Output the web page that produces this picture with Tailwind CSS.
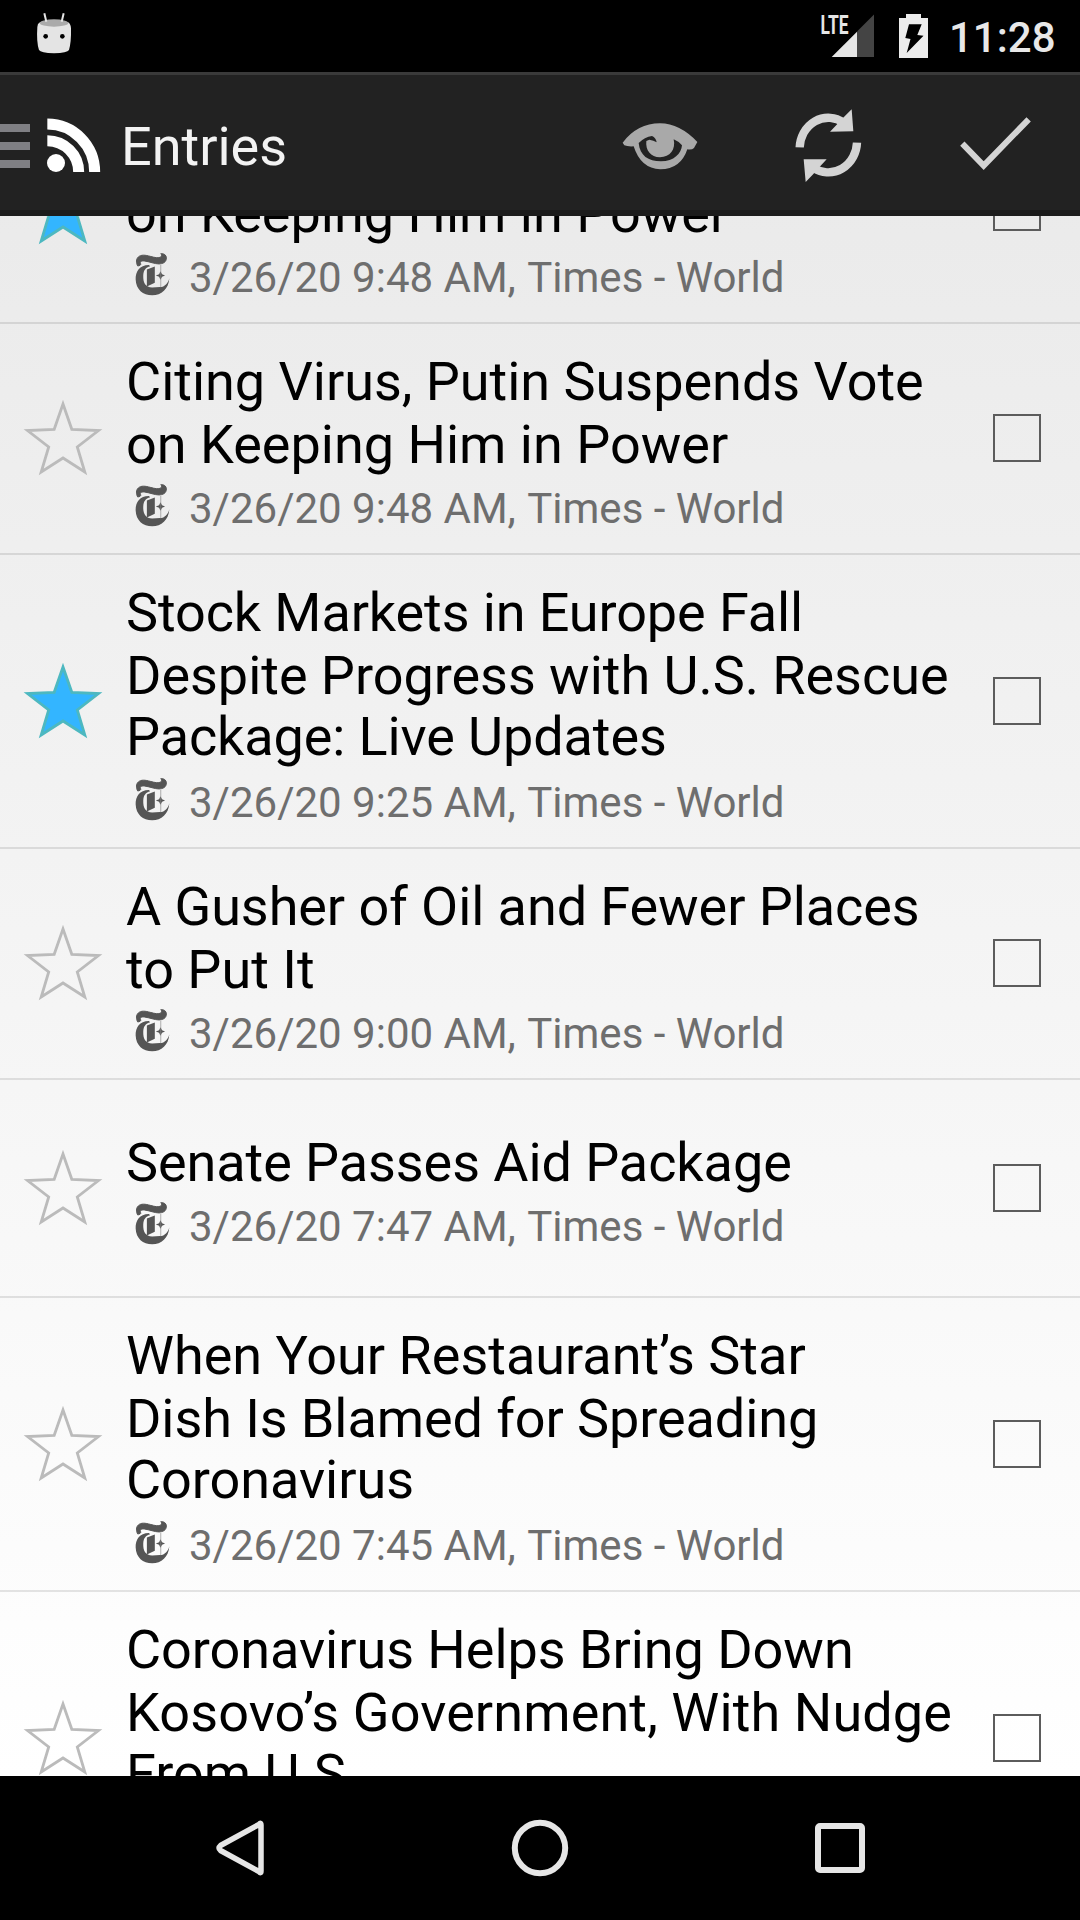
<!DOCTYPE html>
<html lang="en">
<head>
<meta charset="utf-8">
<title>Entries</title>
<script src="https://cdn.jsdelivr.net/npm/@tailwindcss/browser@4"></script>
</head>
<body class="w-[1080px] h-[1920px] overflow-hidden flex flex-col bg-linear-to-b from-[#e8e8e8] to-white to-[1776px] font-['Roboto',sans-serif]">

<svg class="hidden">
  <symbol id="star" viewBox="0 0 126 80">
    <path d="M63 6 L71.8 31.3 L98.500 32.500 L77.300 49 L84.800 74 L63 60 L41.200 74 L48.700 49 L27.500 32.500 L54.200 31.3 Z" stroke-width="2.8"/>
  </symbol>
  <symbol id="paper" viewBox="46 40 106 130">
    <path fill="#555" stroke="#555" stroke-width="3" d="M54 79 C49 70 49 58 56 52 C64 44 78 46 92 50 C106 54 118 56 124 52 C128 49 127 44 124 42 C134 41 141 46 141 55 C141 68 130 73 118 73 C106 73 90 66 74 64 C64 63 60 67 63 72 C65 76 60 79 54 79 Z"/>
    <path fill="#555" d="M88 76 C60 76 47 96 48 120 C49 150 70 168 98 168 C126 168 148 148 150 116 C146 132 136 142 122 143 L98 144 C78 144 70 130 71 108 C72 92 78 84 92 80 Z"/>
    <path fill="#555" d="M82 90 L106 81 L106 130 L82 141 Z"/>
    <path fill="#555" d="M123 95 L128 104 L137 108 L128 112 L123 121 L119 112 L109 108 L119 104 Z"/>
    <path stroke="#888" stroke-width="2" fill="none" d="M124 76 V144"/>
  </symbol>
</svg>

<div class="h-[72px] shrink-0 bg-black flex items-start">
  <svg class="ml-9 mt-[13px] w-9 h-[42px]" viewBox="108 38 108 126">
    <path d="M112 80 Q112 70 120 66 Q162 52 204 66 Q212 70 213 84 Q214 125 207 149 Q202 158 162 159 Q122 158 117 149 Q109 125 112 80Z" fill="#e4e4e4"/>
    <ellipse cx="162" cy="68" rx="43" ry="11" fill="#aaa"/>
    <path d="M133 39 L139 64 M191 39 L185 64" stroke="#e4e4e4" stroke-width="6"/>
    <circle cx="137" cy="108" r="7"/><circle cx="187" cy="108" r="7"/>
  </svg>
  <svg class="ml-[748px] mt-3 w-[56px] h-12" viewBox="820 12 56 48">
    <path d="M857 57 V31.5 L874 14.5 V57Z" fill="#444"/>
    <path d="M831.7 57 L857 31.7 V57Z" fill="#e6e6e6"/>
    <text x="820.5" y="33.8" textLength="28" lengthAdjust="spacingAndGlyphs" font-size="26" font-weight="700" fill="#e6e6e6">LTE</text>
  </svg>
  <svg class="ml-[22px] mt-3 w-[31px] h-12" viewBox="898 12 31 48">
    <path d="M906 14 H921 V18 H928 V58 H899 V18 H906Z" fill="#ececec"/>
    <path d="M909 24.3 H921.7 L917.3 35 L923.5 35.7 L906.7 53 L910.5 39 L905.3 38Z"/>
  </svg>
  <div class="ml-[20px] mt-[13px] text-[42px] leading-[50px] font-medium text-[#e8e8e8]">11:28</div>
</div>

<header class="h-36 shrink-0 bg-[#222] border-t-3 border-t-[#3a3a3a] border-b-6 border-b-[#1b1b1b] flex items-center">
  <div class="flex flex-col gap-[10px] w-[30px] mt-[7px]">
    <div class="h-2 bg-[#808084]"></div><div class="h-2 bg-[#808084]"></div><div class="h-2 bg-[#808084]"></div>
  </div>
  <svg class="ml-4 mt-1 w-[56px] h-[56px]" viewBox="138 348 168 168">
    <circle cx="168" cy="486" r="27" fill="#fff"/>
    <path d="M142 419 A94 94 0 0 1 236 513 M142 369 A142 144 0 0 1 284 513" fill="none" stroke="#fff" stroke-width="33"/>
  </svg>
  <h1 class="ml-[19px] mt-2 w-[499px] text-[54px] leading-[63px] text-[#f3f3f3]">Entries</h1>
  <svg class="mt-2 w-20 h-[60px]" viewBox="120 110 240 180">
    <path fill="#a9a9a9" fill-rule="evenodd" d="M128 187 Q172 129 240 129 Q300 130 352 185 L342 203 Q336 209 322 207 Q302 267 241 267 Q182 265 161 198 Q142 199 133 195Z M176 188 C180 226 204 243 243 243 C282 243 304 220 306 195 Q294 182 281 177 C288 208 270 230 240 231 C212 230 196 210 199 182 L208 178 L220 181 L230 186 Q228 172 216 167 Q194 170 176 188Z"/>
  </svg>
  <svg class="ml-[90px] mt-2 w-20 h-20" viewBox="630 80 240 240">
    <path d="M659 201 A86 93 0 0 1 790 126 M831 187 A86 93 0 0 1 701 263" fill="none" stroke="#d4d4d4" stroke-width="25"/>
    <path d="M815 87 L820 153 L750 154 L777 126 L794 108Z M677 305 L671 237 L740 237 L715 264 L698 283Z" fill="#d4d4d4"/>
  </svg>
  <svg class="ml-[86px] w-20 h-[60px]" viewBox="1130 100 240 180">
    <path d="M1149 192 L1213 258 L1348 119" fill="none" stroke="#d4d4d4" stroke-width="18"/>
  </svg>
</header>

<main id="list" class="h-[1560px] shrink-0 overflow-hidden flex flex-col"></main>

<nav class="h-36 shrink-0 bg-black flex items-center justify-center gap-[240px]">
  <svg class="w-[60px] h-[60px]" viewBox="210 1818 60 60">
    <path d="M261 1825 V1871 Q261 1874 259 1871.500 L220.500 1850.500 Q217.500 1848 220.500 1845.500 L259 1824.500 Q261 1822 261 1825Z" fill="none" stroke="#e6e6e6" stroke-width="5.500" stroke-linejoin="round"/>
  </svg>
  <svg class="w-[60px] h-[60px]" viewBox="0 0 60 60"><circle cx="30" cy="30" r="25.200" fill="none" stroke="#e6e6e6" stroke-width="6"/></svg>
  <svg class="w-[60px] h-[60px]" viewBox="0 0 60 60"><rect x="8" y="8" width="44" height="44" rx="2" fill="none" stroke="#e6e6e6" stroke-width="6"/></svg>
</nav>

<script>
// Each title line is [text, letter spacing in px].
const entries = [
  { title: [["Citing Virus, Putin Suspends Vote", -0.02], ["on Keeping Him in Power", 0]], time: "9:48", starred: true },
  { title: [["Citing Virus, Putin Suspends Vote", -0.02], ["on Keeping Him in Power", 0]], time: "9:48" },
  { title: [["Stock Markets in Europe Fall", -0.11], ["Despite Progress with U.S. Rescue", -0.03], ["Package: Live Updates", -0.11]], time: "9:25", starred: true },
  { title: [["A Gusher of Oil and Fewer Places", -0.08], ["to Put It", 0]], time: "9:00" },
  { title: [["Senate Passes Aid Package", -0.08]], time: "7:47" },
  { title: [["When Your Restaurant’s Star", 0], ["Dish Is Blamed for Spreading", -0.09], ["Coronavirus", -0.05]], time: "7:45" },
  { title: [["Coronavirus Helps Bring Down", -0.05], ["Kosovo’s Government, With Nudge", 0.11], ["From U.S.", 0]], time: "7:40" },
];
document.getElementById("list").innerHTML = entries.map((e) => `
  <article class="shrink-0 flex items-center min-h-[218px] border-b-2 border-black/10 first:-mt-[123px]">
    <svg class="w-[126px] h-20 mb-px shrink-0 ${e.starred ? "fill-[#33b5ff] stroke-[#4db8c0]" : "fill-none stroke-[#bbbbbb]"}"><use href="#star"/></svg>
    <div class="w-[867px] pt-[26px] pb-[19px] whitespace-nowrap">
      <h2 class="text-[54px] leading-[63px] text-black">${e.title.map(([l, s], i) => `<span class="${i === 2 ? "block -mt-0.5 pb-0.5" : "block"}" style="letter-spacing:${s}px">${l}</span>`).join("")}</h2>
      <div class="mt-2 flex items-start text-[42px] leading-[50px] text-[#6e6e6e]">
        <svg class="ml-[9px] w-[35px] h-[43px] shrink-0"><use href="#paper"/></svg>
        <span class="ml-[19px]">3/26/20 ${e.time} AM, <span class="ml-px">Times - World</span></span>
      </div>
    </div>
    <div class="w-12 h-12 mb-[0.5px] border-2 border-[#5c5c5c]"></div>
  </article>`).join("");
</script>
</body>
</html>
